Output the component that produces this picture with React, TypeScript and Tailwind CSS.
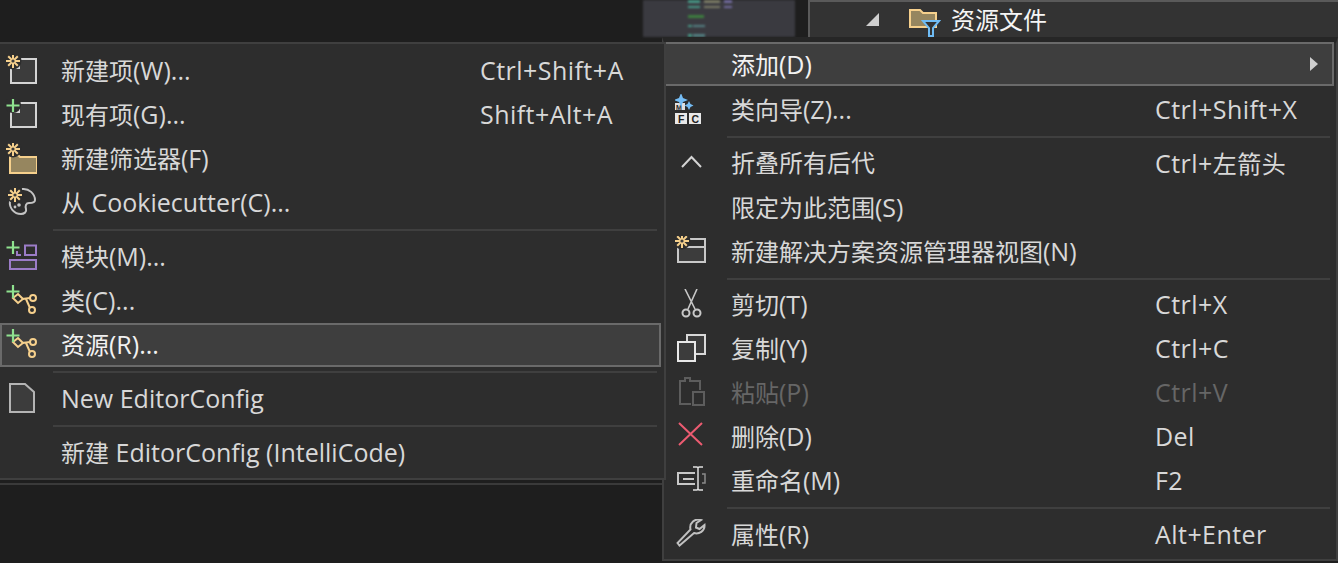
import type { ReactNode } from 'react';

const YELLOW = '#f6d08c';
const GREEN = '#8fe28f';
const GRAY = '#d4d4d4';

function Star({ x, y }: { x: number; y: number }) {
    return (
        <g stroke={YELLOW} strokeWidth="2">
            <circle cx={x} cy={y} r="8.5" fill="#2d2d2d" stroke="none" />
            <path d={`M${x} ${y - 7}V${y + 7}M${x - 7} ${y}H${x + 7}M${x - 4.8} ${y - 4.8}L${x + 4.8} ${y + 4.8}M${x - 4.8} ${y + 4.8}L${x + 4.8} ${y - 4.8}`} />
            <circle cx={x} cy={y} r="1.6" fill="#3a3a3a" stroke="none" />
        </g>
    );
}

function Plus() {
    return <path d="M8 0V13M1.5 6.5H14.5" stroke={GREEN} strokeWidth="2.2" fill="none" />;
}

function Icon({ children }: { children: ReactNode }) {
    return (
        <svg width="32" height="32" viewBox="0 0 32 32" fill="none" className="shrink-0">
            {children}
        </svg>
    );
}

const PageBox = () => <path d="M14 4H31V28H6V13H14Z" fill="#3c3c3c" stroke={GRAY} strokeWidth="2" />;

const ClassNodes = () => (
    <g stroke={YELLOW} strokeWidth="2" fill="none">
        <path d="M8 13L13 9L18 14L13 18Z" />
        <path d="M17 14L25 13M21 14L25 23" />
        <circle cx="28" cy="13" r="3" />
        <circle cx="27" cy="25" r="3" />
    </g>
);

const leftIcons: Record<string, ReactNode> = {
    newItem: <Icon><PageBox /><Star x={8} y={6} /></Icon>,
    existing: <Icon><PageBox /><circle cx="8" cy="6" r="8" fill="#2d2d2d" /><Plus /></Icon>,
    filter: (
        <Icon>
            <path d="M5 12H13L15 14H32V30H5Z" fill="#96865f" stroke={YELLOW} strokeWidth="2" />
            <Star x={8} y={6} />
        </Icon>
    ),
    cookie: (
        <Icon>
            <path d="M17 2C24 1 30 7 30 13C30 16 27 16 24 16C21 16 20 19 21 22C22 25 19 27 16 27C9 27 4 21 5 14" stroke="#c4c4c4" strokeWidth="2" />
            <circle cx="14" cy="18" r="1.8" fill="#c4c4c4" />
            <circle cx="10" cy="20" r="1.4" fill="#c4c4c4" />
            <Star x={10} y={8} />
        </Icon>
    ),
    module: (
        <Icon>
            <path d="M20 4.500H31V14H20ZM12 10V14H16" stroke="#9b7cc7" strokeWidth="2" />
            <path d="M5 19H31V28H5Z" fill="#3c3c3c" stroke="#9b7cc7" strokeWidth="2" />
            <Plus />
        </Icon>
    ),
    cls: <Icon><ClassNodes /><Plus /></Icon>,
    doc: <Icon><path d="M5 1H20L29 9V29H5Z" fill="#3c3c3c" stroke="#b4b4b4" strokeWidth="2" /></Icon>,
};

const rightIcons: Record<string, ReactNode> = {
    wizard: (
        <Icon>
            <rect x="0" y="9" width="10" height="7" fill="#e0e0e0" />
            <text x="1" y="15.500" fontSize="7" fontWeight="700" fill="#222" fontFamily="Liberation Sans, sans-serif">M</text>
            <path d="M6 -1L8 4L13 6L8 8L6 13L4 8L-1 6L4 4Z" fill="#75bdf5" />
            <path d="M14 7L15.500 10L18.500 11.500L15.500 13L14 16L12.500 13L9.500 11.500L12.500 10Z" fill="#75bdf5" />
            <rect x="0" y="19" width="12" height="11" fill="#e8e8e8" />
            <rect x="14" y="19" width="12" height="11" fill="#e8e8e8" />
            <text x="3" y="28.500" fontSize="10.500" fontWeight="700" fill="#222" fontFamily="Liberation Sans, sans-serif">F</text>
            <text x="16.500" y="28.500" fontSize="10.500" fontWeight="700" fill="#222" fontFamily="Liberation Sans, sans-serif">C</text>
        </Icon>
    ),
    collapse: <Icon><path d="M7 19L16.500 9L26 19" stroke={GRAY} strokeWidth="2" /></Icon>,
    view: (
        <Icon>
            <path d="M3 11H30V26H3Z" fill="#3c3c3c" />
            <path d="M10 3H30V26H3V9M3 11H30" stroke="#c8c8c8" strokeWidth="2" />
            <Star x={7} y={5} />
        </Icon>
    ),
    cut: (
        <Icon>
            <path d="M10 0L20 20M22 0L13 20" stroke="#c8c8c8" strokeWidth="1.600" />
            <circle cx="11" cy="24" r="3.500" stroke="#c8c8c8" strokeWidth="2" />
            <circle cx="22" cy="24" r="3.500" stroke="#c8c8c8" strokeWidth="2" />
        </Icon>
    ),
    copy: (
        <Icon>
            <path d="M12 2H30V21H20V9H12Z" fill="#3c3c3c" stroke="#d8d8d8" strokeWidth="2" />
            <path d="M3 9H20V28H3Z" fill="#3c3c3c" stroke="#e8e8e8" strokeWidth="2" />
        </Icon>
    ),
    paste: (
        <Icon>
            <path d="M16 27H5V4H10V1H15V4H25V13" stroke="#5d5d5d" strokeWidth="2" />
            <path d="M18 15H29V28H18Z" stroke="#5d5d5d" strokeWidth="2" />
        </Icon>
    ),
    del: <Icon><path d="M4 2L27 24M27 2L4 24" stroke="#ec5b71" strokeWidth="2" /></Icon>,
    rename: (
        <Icon>
            <path d="M20 8H3V19H20" stroke="#c8c8c8" strokeWidth="2" />
            <path d="M8 14H19" stroke="#c8c8c8" strokeWidth="2" />
            <path d="M18 2H22L23 3L24 2H28M23 3V24M18 25H22L23 24L24 25H28" stroke="#e0e0e0" strokeWidth="1.500" />
            <path d="M27 9H30V18H27" stroke="#8a8a8a" strokeWidth="1.500" />
        </Icon>
    ),
    wrench: (
        <Icon>
            <path d="M2.500 24L4.500 26.500L19 14C24 15.500 30 12 29.500 6L24.500 10L21 8.500L21.500 4L26 1C20 -1 14 4 15.500 10.500Z" stroke="#c0c0c0" strokeWidth="2" />
        </Icon>
    ),
};

type Item = { label?: string; icon?: ReactNode; shortcut?: string; hot?: boolean; dim?: boolean; arrow?: boolean; sep?: boolean; tight?: boolean };

const leftItems: Item[] = [
    { label: '新建项(W)...', icon: leftIcons.newItem, shortcut: 'Ctrl+Shift+A' },
    { label: '现有项(G)...', icon: leftIcons.existing, shortcut: 'Shift+Alt+A' },
    { label: '新建筛选器(F)', icon: leftIcons.filter },
    { label: '从 Cookiecutter(C)...', icon: leftIcons.cookie },
    { sep: true },
    { label: '模块(M)...', icon: leftIcons.module },
    { label: '类(C)...', icon: leftIcons.cls },
    { label: '资源(R)...', icon: leftIcons.cls, hot: true },
    { sep: true },
    { label: 'New EditorConfig', icon: leftIcons.doc },
    { sep: true },
    { label: '新建 EditorConfig (IntelliCode)' },
];

const rightItems: Item[] = [
    { label: '添加(D)', hot: true, arrow: true },
    { label: '类向导(Z)...', icon: rightIcons.wizard, shortcut: 'Ctrl+Shift+X' },
    { sep: true },
    { label: '折叠所有后代', icon: rightIcons.collapse, shortcut: 'Ctrl+左箭头' },
    { label: '限定为此范围(S)' },
    { label: '新建解决方案资源管理器视图(N)', icon: rightIcons.view },
    { sep: true, tight: true },
    { label: '剪切(T)', icon: rightIcons.cut, shortcut: 'Ctrl+X' },
    { label: '复制(Y)', icon: rightIcons.copy, shortcut: 'Ctrl+C' },
    { label: '粘贴(P)', icon: rightIcons.paste, shortcut: 'Ctrl+V', dim: true },
    { label: '删除(D)', icon: rightIcons.del, shortcut: 'Del' },
    { label: '重命名(M)', icon: rightIcons.rename, shortcut: 'F2' },
    { sep: true },
    { label: '属性(R)', icon: rightIcons.wrench, shortcut: 'Alt+Enter' },
];

// latin runs sit a little wider than the CJK ones in the reference
function MixedText({ text }: { text: string }) {
    return (
        <>
            {text.split(/([\x00-\x7f]+)/).map((run, i) =>
                /[\x00-\x7f]/.test(run) ? <span key={i} className="text-[25px]">{run}</span> : run
            )}
        </>
    );
}

function MenuRow({ item, side }: { item: Item; side: 'left' | 'right' }) {
    const isLeft = side === 'left';
    if (item.sep) {
        return (
            <div className={`flex items-center pr-1 ${item.tight ? 'h-[9px]' : 'h-2.5'} ${isLeft ? 'pl-[53px]' : 'pl-[63px]'}`}>
                <div className="h-0.5 w-full bg-[#3f3f3f]" />
            </div>
        );
    }
    const color = item.dim ? 'text-[#666666]' : item.hot ? 'text-[#f2f2f2]' : 'text-[#d8d8d8]';
    const topRow = !isLeft && item.hot;
    return (
        <div
            className={`relative flex h-11 items-center ${color} ${item.hot ? 'border-2 border-[#6a6a6a] bg-[#3e3e3e]' : 'border-2 border-transparent'} ${isLeft ? 'pl-[3px]' : 'pl-[9px]'} ${topRow ? '-mt-px mb-0.5' : ''}`}
        >
            <div className="w-14 shrink-0">{item.icon}</div>
            <span className={`-mt-0.5 shrink-0 whitespace-nowrap ${isLeft ? 'w-[419px]' : 'w-[424px]'} ${topRow ? 'pt-0.5' : ''}`}>
                <MixedText text={item.label ?? ''} />
            </span>
            {item.shortcut && (
                <span className="-mt-0.5 whitespace-nowrap tracking-[0.45px]">
                    <MixedText text={item.shortcut} />
                </span>
            )}
            {item.arrow && <span className="absolute right-[14px] top-[13px] h-0 w-0 border-y-[7px] border-l-[8px] border-y-transparent border-l-[#cfcfcf]" />}
        </div>
    );
}

function Thumbnail() {
    return (
        <div className="flex h-[37px] w-[152px] shrink-0 flex-col gap-[3px] bg-[#3a3a40] pl-[45px] blur-[1px]">
            <div className="flex h-1 gap-1 opacity-70"><div className="w-3 bg-[#4fc1a6]" /><div className="w-4 bg-[#9a9a78]" /><div className="w-2 bg-[#8a80c8]" /></div>
            <div className="flex h-1 gap-1 opacity-70"><div className="w-3 bg-[#4fc1a6]" /><div className="w-4 bg-[#9a9a78]" /><div className="w-2 bg-[#8a80c8]" /></div>
            <div className="mt-1 h-1 w-4 bg-[#3f9a3f] opacity-70" />
            <div className="mt-1 flex h-1 gap-px opacity-70"><div className="w-1 bg-[#4fc1a6]" /><div className="w-3 bg-[#5f9ea0]" /></div>
            <div className="mt-1 flex h-1 gap-px opacity-70"><div className="w-1 bg-[#4fc1a6]" /><div className="w-3 bg-[#5f9ea0]" /></div>
        </div>
    );
}

export default function App() {
    return (
        <div className="relative h-[563px] w-[1338px] overflow-hidden bg-[#1e1e1e] text-[24px] leading-none font-['Open_Sans','Noto_Sans_CJK_SC',sans-serif]">
            <div className="flex h-[37px]">
                <div className="flex-1" />
                <Thumbnail />
                <div className="w-[13px] shrink-0" />
                <div className="flex w-[530px] shrink-0 items-center border-l-2 border-t-2 border-[#5a5a5a] bg-[#333333] pl-14 text-[#f5f5f5]">
                    <span className="h-0 w-0 border-b-[13px] border-l-[13px] border-b-[#cfcfcf] border-l-transparent" />
                    <svg width="32" height="28" viewBox="0 0 32 28" fill="none" className="ml-[30px] mt-1.5 shrink-0">
                        <path d="M1 1H11L14 4H27V18H1Z" fill="#96865f" stroke={YELLOW} strokeWidth="2" />
                        <path d="M14 12H30L24 19V27H20V19Z" fill="#333333" stroke="#6fbcf5" strokeWidth="2" />
                    </svg>
                    <span className="ml-2.5 whitespace-nowrap">资源文件</span>
                </div>
            </div>

            {/* bottom edge of the window behind the left menu */}
            <div className="absolute left-0 top-[483px] h-0.5 w-[662px] bg-[#3a3a3a]" />

            {/* right menu */}
            <div className="absolute left-[662px] top-[37px] h-[524px] w-[676px] border-2 border-[#3f3f3f] border-t-[6px] border-t-[#262626] bg-[#2d2d2d] pr-0.5">
                {rightItems.map((item, i) => (
                    <MenuRow key={i} item={item} side="right" />
                ))}
            </div>

            {/* left menu */}
            <div className="absolute left-0 top-[42px] h-[438px] w-[666px] border-y-2 border-r-2 border-[#3f3f3f] bg-[#2d2d2d] pt-[5px] pr-[3px]">
                {leftItems.map((item, i) => (
                    <MenuRow key={i} item={item} side="left" />
                ))}
            </div>
        </div>
    );
}
